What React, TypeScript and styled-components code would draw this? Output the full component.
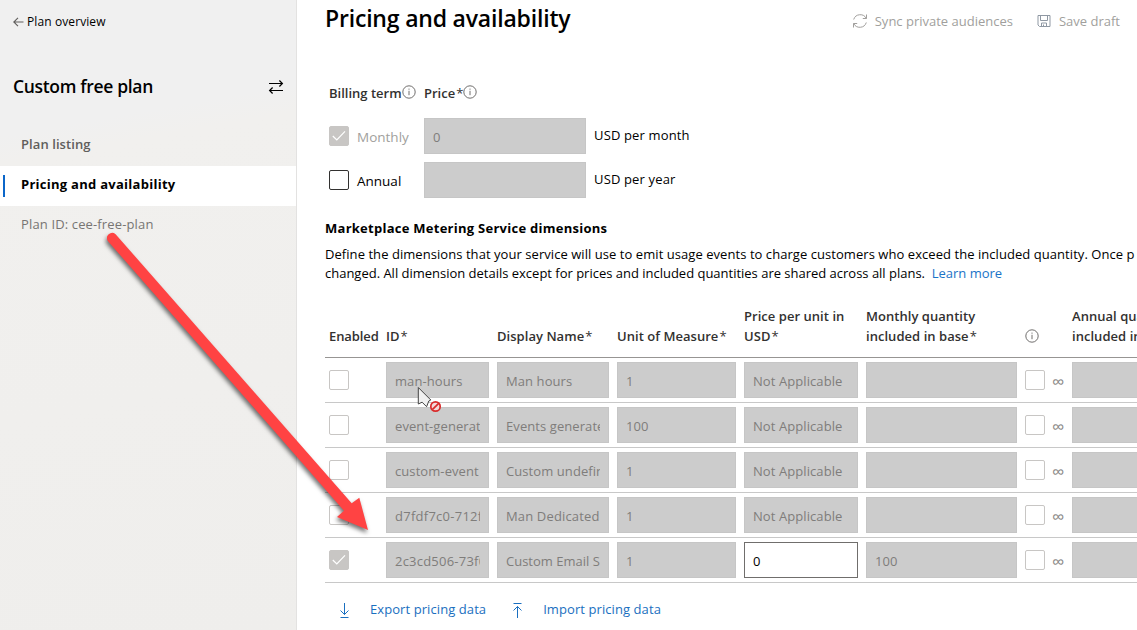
import React from "react";
import styled, { createGlobalStyle } from "styled-components";

const GlobalStyle = createGlobalStyle`
  * { box-sizing: border-box; }
  html, body { margin: 0; padding: 0; background: #fff; overflow: hidden; }
  body { font-family: "Open Sans", "Noto Sans", sans-serif; font-size: 13px; line-height: 20px; color: #000; }
`;

const Page = styled.div`
  position: relative;
  display: flex;
  width: 1137px;
  height: 630px;
  overflow: hidden;
  white-space: nowrap;
`;

const Sidebar = styled.aside`
  flex: none;
  width: 297px;
  height: 630px;
  border-right: 1px solid #e3e2e1;
  background: linear-gradient(170deg, #f0f0f0 0%, #f0f0f0 20%, #f1f0ee 24%, #efeeec 100%);
`;

const BackLink = styled.div`
  display: flex;
  align-items: center;
  gap: 3px;
  height: 20px;
  margin: 12px 0 0 13px;
  font-size: 12px;
  letter-spacing: 0.1px;
`;

const PlanHeader = styled.div`
  display: flex;
  align-items: center;
  justify-content: space-between;
  height: 26px;
  margin: 42px 12px 0 13px;
`;

const PlanName = styled.h2`
  margin: -2px 0 0;
  font-size: 17.5px;
  line-height: 26px;
  font-weight: 600;
  letter-spacing: -0.33px;
`;

const Nav = styled.nav`
  margin-top: 26px;
`;

const NavItem = styled.div<{ $active?: boolean; $medium?: boolean }>`
  display: flex;
  align-items: center;
  height: 40px;
  padding: 0 0 5px 3px;
  background: ${(p) => (p.$active ? "#fff" : "transparent")};
  color: ${(p) => (p.$active ? "#000" : p.$medium ? "#605e5c" : "#777573")};
  font-weight: ${(p) => (p.$active ? 700 : p.$medium ? 600 : 400)};
  letter-spacing: ${(p) => (p.$active ? 0.27 : p.$medium ? 0.08 : 0.14)}px;
  &::before {
    content: "";
    width: 2px;
    height: 22px;
    margin: 5px 16px 0 0;
    background: ${(p) => (p.$active ? "#0b66c9" : "transparent")};
  }
`;

const Main = styled.main`
  flex: none;
  width: 840px;
  height: 630px;
  padding-left: 28px;
  overflow: hidden;
`;

const TopBar = styled.header`
  display: flex;
  justify-content: space-between;
  height: 42px;
  padding-right: 17px;
`;

const Title = styled.h1`
  margin: 2px 0 0;
  font-size: 23px;
  line-height: 32px;
  font-weight: 600;
  letter-spacing: -0.19px;
`;

const Commands = styled.div`
  display: flex;
  align-items: center;
  gap: 24px;
  color: #a19f9d;
`;

const Command = styled.div<{ $gap: number }>`
  display: flex;
  align-items: center;
  gap: ${(p) => p.$gap}px;
`;

const TermGrid = styled.section`
  display: grid;
  grid-template-columns: 95px 162px auto;
  grid-template-rows: 36px 36px 36px;
  row-gap: 8px;
  margin: 32px 0 0 4px;
  align-items: center;
`;

const FieldLabel = styled.div`
  display: flex;
  align-items: center;
  height: 20px;
  padding-top: 2px;
  font-weight: 600;
  color: #323130;
  svg { margin-top: -3px; }
`;

const CheckField = styled.div<{ $muted?: boolean }>`
  display: flex;
  align-items: center;
  gap: 8px;
  font-size: 13.5px;
  color: ${(p) => (p.$muted ? "#a19f9d" : "#000")};
`;

const CheckLabel = styled.span`
  padding-top: 2px;
`;

const Box = styled.span<{ $kind: "strong" | "light" | "filled" }>`
  display: flex;
  flex: none;
  align-items: center;
  justify-content: center;
  width: 20px;
  height: 20px;
  border: 1px solid ${(p) => (p.$kind === "strong" ? "#323130" : "#c8c6c4")};
  border-radius: 2px;
  background: ${(p) => (p.$kind === "filled" ? "#c8c6c4" : "#fff")};
`;

const Field = styled.div<{ $enabled?: boolean }>`
  height: 36px;
  padding: 1px 8px 0;
  border: 1px solid ${(p) => (p.$enabled ? "#706e6c" : "#c6c6c6")};
  background: ${(p) => (p.$enabled ? "#fff" : "#ccc")};
  color: ${(p) => (p.$enabled ? "#000" : "#7f7d7b")};
  line-height: 34px;
`;

const FieldText = styled.div<{ $spacing?: number }>`
  height: 32px;
  overflow: hidden;
  letter-spacing: ${(p) => p.$spacing ?? 0.08}px;
`;

const Unit = styled.span`
  padding: 0 0 3px 8px;
  letter-spacing: 0.15px;
`;

const SectionTitle = styled.h3`
  margin: 20px 0 0;
  font-size: 13px;
  line-height: 20px;
  font-weight: 700;
  letter-spacing: 0.26px;
`;

const Description = styled.p`
  margin: 7px 0 0;
  line-height: 19px;
`;

const DescriptionLine = styled.span<{ $spacing: number }>`
  display: block;
  letter-spacing: ${(p) => p.$spacing}px;
`;

const Link = styled.a`
  color: #1a73c7;
`;

const columns = "49px 103px 112px 119px 114px 151px 39px 150px";

const TableHead = styled.div`
  display: grid;
  grid-template-columns: ${columns};
  column-gap: 8px;
  align-items: end;
  width: 950px;
  height: 75px;
  padding: 0 0 11px 4px;
  border-bottom: 1px solid #979593;
  color: #323130;
  font-weight: 600;
`;

const HeadCell = styled.div<{ $spacing?: number }>`
  letter-spacing: ${(p) => p.$spacing ?? 0.04}px;
  svg { display: block; margin-bottom: 3px; }
`;

const Star = styled.span`
  padding-left: 1px;
  font-weight: 400;
`;

const Row = styled.div`
  display: grid;
  grid-template-columns: ${columns};
  column-gap: 8px;
  align-items: center;
  width: 950px;
  height: 45px;
  padding-left: 4px;
  border-bottom: 1px solid #c8c8c8;
`;

const Unlimited = styled.div`
  display: flex;
  align-items: center;
  gap: 7px;
  color: #8a8886;
`;

const InfinityMark = styled.span`
  padding-top: 2px;
  font-size: 17.5px;
`;

const Footer = styled.footer`
  display: flex;
  align-items: center;
  gap: 26px;
  height: 54px;
  padding-left: 14px;
  color: #1a6fc0;
`;

const FooterLabel = styled.span`
  padding-bottom: 2px;
  letter-spacing: 0.08px;
`;

const Overlay = styled.svg`
  position: absolute;
  left: 0;
  top: 0;
  pointer-events: none;
`;

const Info = () => (
  <svg width="14" height="14" viewBox="0 0 14 14" fill="none" stroke="#605e5c" strokeWidth="0.9">
    <circle cx="7" cy="7" r="6.2" />
    <path d="M7 5.8v4.400M7 3.600v1.100" />
  </svg>
);

const Check = () => (
  <svg width="14" height="12" viewBox="0 0 14 12" fill="none" stroke="#fff" strokeWidth="1.2">
    <path d="M0.8 6l4 4L13 1.400" />
  </svg>
);

const BackArrow = () => (
  <svg width="11" height="10" viewBox="0 0 11 10" fill="none" stroke="#605e5c" strokeWidth="1.1">
    <path d="M10.500 5H0.800M5 0.800L0.800 5L5 9.200" />
  </svg>
);

const Swap = () => (
  <svg width="16" height="16" viewBox="0 0 16 16" fill="none" stroke="#000" strokeWidth="1.2">
    <path d="M1 4.500h13.400M11.400 1.500l3 3l-3 3M15 11.500H1.600M4.600 8.500l-3 3l3 3" />
  </svg>
);

const Sync = () => (
  <svg width="16" height="16" viewBox="0 0 16 16" fill="none" stroke="#a19f9d" strokeWidth="1">
    <path d="M1.700 6.500A6.800 6.800 0 0 1 14.300 5.500M14.500 1.500V5.500H10.800M14.300 9.500A6.800 6.800 0 0 1 1.700 10.500M1.500 14.500V10.500H5.200" />
  </svg>
);

const Save = () => (
  <svg width="14" height="14" viewBox="0 0 14 14" fill="none" stroke="#8f98a3" strokeWidth="1">
    <path d="M1 1.500h12v11H2.500L1 11zM3.500 1.500v5h7v-5M4.500 12.500v-3.500h5v3.500M6.500 12.500v-2" />
  </svg>
);

const Download = () => (
  <svg width="12" height="15" viewBox="0 0 12 15" fill="none" stroke="#1a6fc0" strokeWidth="1">
    <path d="M5.500 0v11.500M1.500 7.500l4 4l4-4M1.500 14.500h8" />
  </svg>
);

const Upload = () => (
  <svg width="12" height="15" viewBox="0 0 12 15" fill="none" stroke="#1a6fc0" strokeWidth="1">
    <path d="M5.500 15V3.500M1.500 7.500l4-4l4 4M1.500 0.500h8" />
  </svg>
);

const rows = [
  { id: "man-hours", name: "Man hours", unit: "1", price: "Not Applicable", monthly: "" },
  { id: "event-generated", name: "Events generated", unit: "100", price: "Not Applicable", monthly: "" },
  { id: "custom-event", name: "Custom undefined", unit: "1", price: "Not Applicable", monthly: "" },
  { id: "d7fdf7c0-712f", idSpacing: 0.26, name: "Man Dedicated", nameSpacing: 0.15, unit: "1", price: "Not Applicable", monthly: "" },
  { id: "2c3cd506-73f0", idSpacing: 0.22, name: "Custom Email S", nameSpacing: 0, unit: "1", price: "0", monthly: "100", on: true },
];

export default function App() {
  return (
    <Page>
      <GlobalStyle />
      <Sidebar>
        <BackLink><BackArrow />Plan overview</BackLink>
        <PlanHeader><PlanName>Custom free plan</PlanName><Swap /></PlanHeader>
        <Nav>
          <NavItem $medium>Plan listing</NavItem>
          <NavItem $active>Pricing and availability</NavItem>
          <NavItem>Plan ID: cee-free-plan</NavItem>
        </Nav>
      </Sidebar>
      <Main>
        <TopBar>
          <Title>Pricing and availability</Title>
          <Commands>
            <Command $gap={7}><Sync />Sync private audiences</Command>
            <Command $gap={8}><Save />Save draft</Command>
          </Commands>
        </TopBar>
        <TermGrid>
          <FieldLabel>Billing term<Info /></FieldLabel>
          <FieldLabel>Price<Star>*</Star><Info /></FieldLabel>
          <span />
          <CheckField $muted><Box $kind="filled"><Check /></Box><CheckLabel>Monthly</CheckLabel></CheckField>
          <Field><FieldText>0</FieldText></Field>
          <Unit>USD per month</Unit>
          <CheckField><Box $kind="strong" /><CheckLabel>Annual</CheckLabel></CheckField>
          <Field />
          <Unit>USD per year</Unit>
        </TermGrid>
        <SectionTitle>Marketplace Metering Service dimensions</SectionTitle>
        <Description>
          <DescriptionLine $spacing={0.055}>Define the dimensions that your service will use to emit usage events to charge customers who exceed the included quantity. Once p</DescriptionLine>
          <DescriptionLine $spacing={-0.01}>changed. All dimension details except for prices and included quantities are shared across all plans. &nbsp;<Link>Learn more</Link></DescriptionLine>
        </Description>
        <TableHead>
          <HeadCell $spacing={-0.08}>Enabled</HeadCell>
          <HeadCell>ID<Star>*</Star></HeadCell>
          <HeadCell>Display Name<Star>*</Star></HeadCell>
          <HeadCell>Unit of Measure<Star>*</Star></HeadCell>
          <HeadCell>Price per unit in<br />USD<Star>*</Star></HeadCell>
          <HeadCell>Monthly quantity<br />included in base<Star>*</Star></HeadCell>
          <HeadCell><Info /></HeadCell>
          <HeadCell>Annual quantity<br />included in base<Star>*</Star></HeadCell>
        </TableHead>
        {rows.map((r) => (
          <Row key={r.id}>
            <Box $kind={r.on ? "filled" : "light"}>{r.on && <Check />}</Box>
            <Field><FieldText $spacing={r.idSpacing}>{r.id}</FieldText></Field>
            <Field><FieldText $spacing={r.nameSpacing}>{r.name}</FieldText></Field>
            <Field><FieldText>{r.unit}</FieldText></Field>
            <Field $enabled={r.on}><FieldText>{r.price}</FieldText></Field>
            <Field><FieldText>{r.monthly}</FieldText></Field>
            <Unlimited><Box $kind="light" /><InfinityMark>∞</InfinityMark></Unlimited>
            <Field />
          </Row>
        ))}
        <Footer>
          <Command $gap={19}><Download /><FooterLabel>Export pricing data</FooterLabel></Command>
          <Command $gap={19}><Upload /><FooterLabel>Import pricing data</FooterLabel></Command>
        </Footer>
      </Main>
      <Overlay width="1137" height="630" viewBox="0 0 1137 630">
        <path d="M418.300 387.500v16.500l3.800-1.800l4.500 4.500l2.200-5.700l2-1z" fill="#f0f0f0" stroke="#444" strokeWidth="1" strokeLinejoin="round" />
        <g fill="#f3dada" stroke="#d92b2b" strokeWidth="1.700">
          <circle cx="435.500" cy="406.500" r="4.700" />
          <path d="M432.300 409.700l6.400-6.400" />
        </g>
        <path
          d="M115.600 234.200L351.700 503.300L359.300 497.700L368 530L337 517L344 510.700L108 241.200A5.200 5.200 0 0 1 115.600 234.200Z"
          fill="#ff4343"
          style={{ filter: "drop-shadow(-1px 3px 2px rgba(0,0,0,0.55))" }}
        />
      </Overlay>
    </Page>
  );
}
